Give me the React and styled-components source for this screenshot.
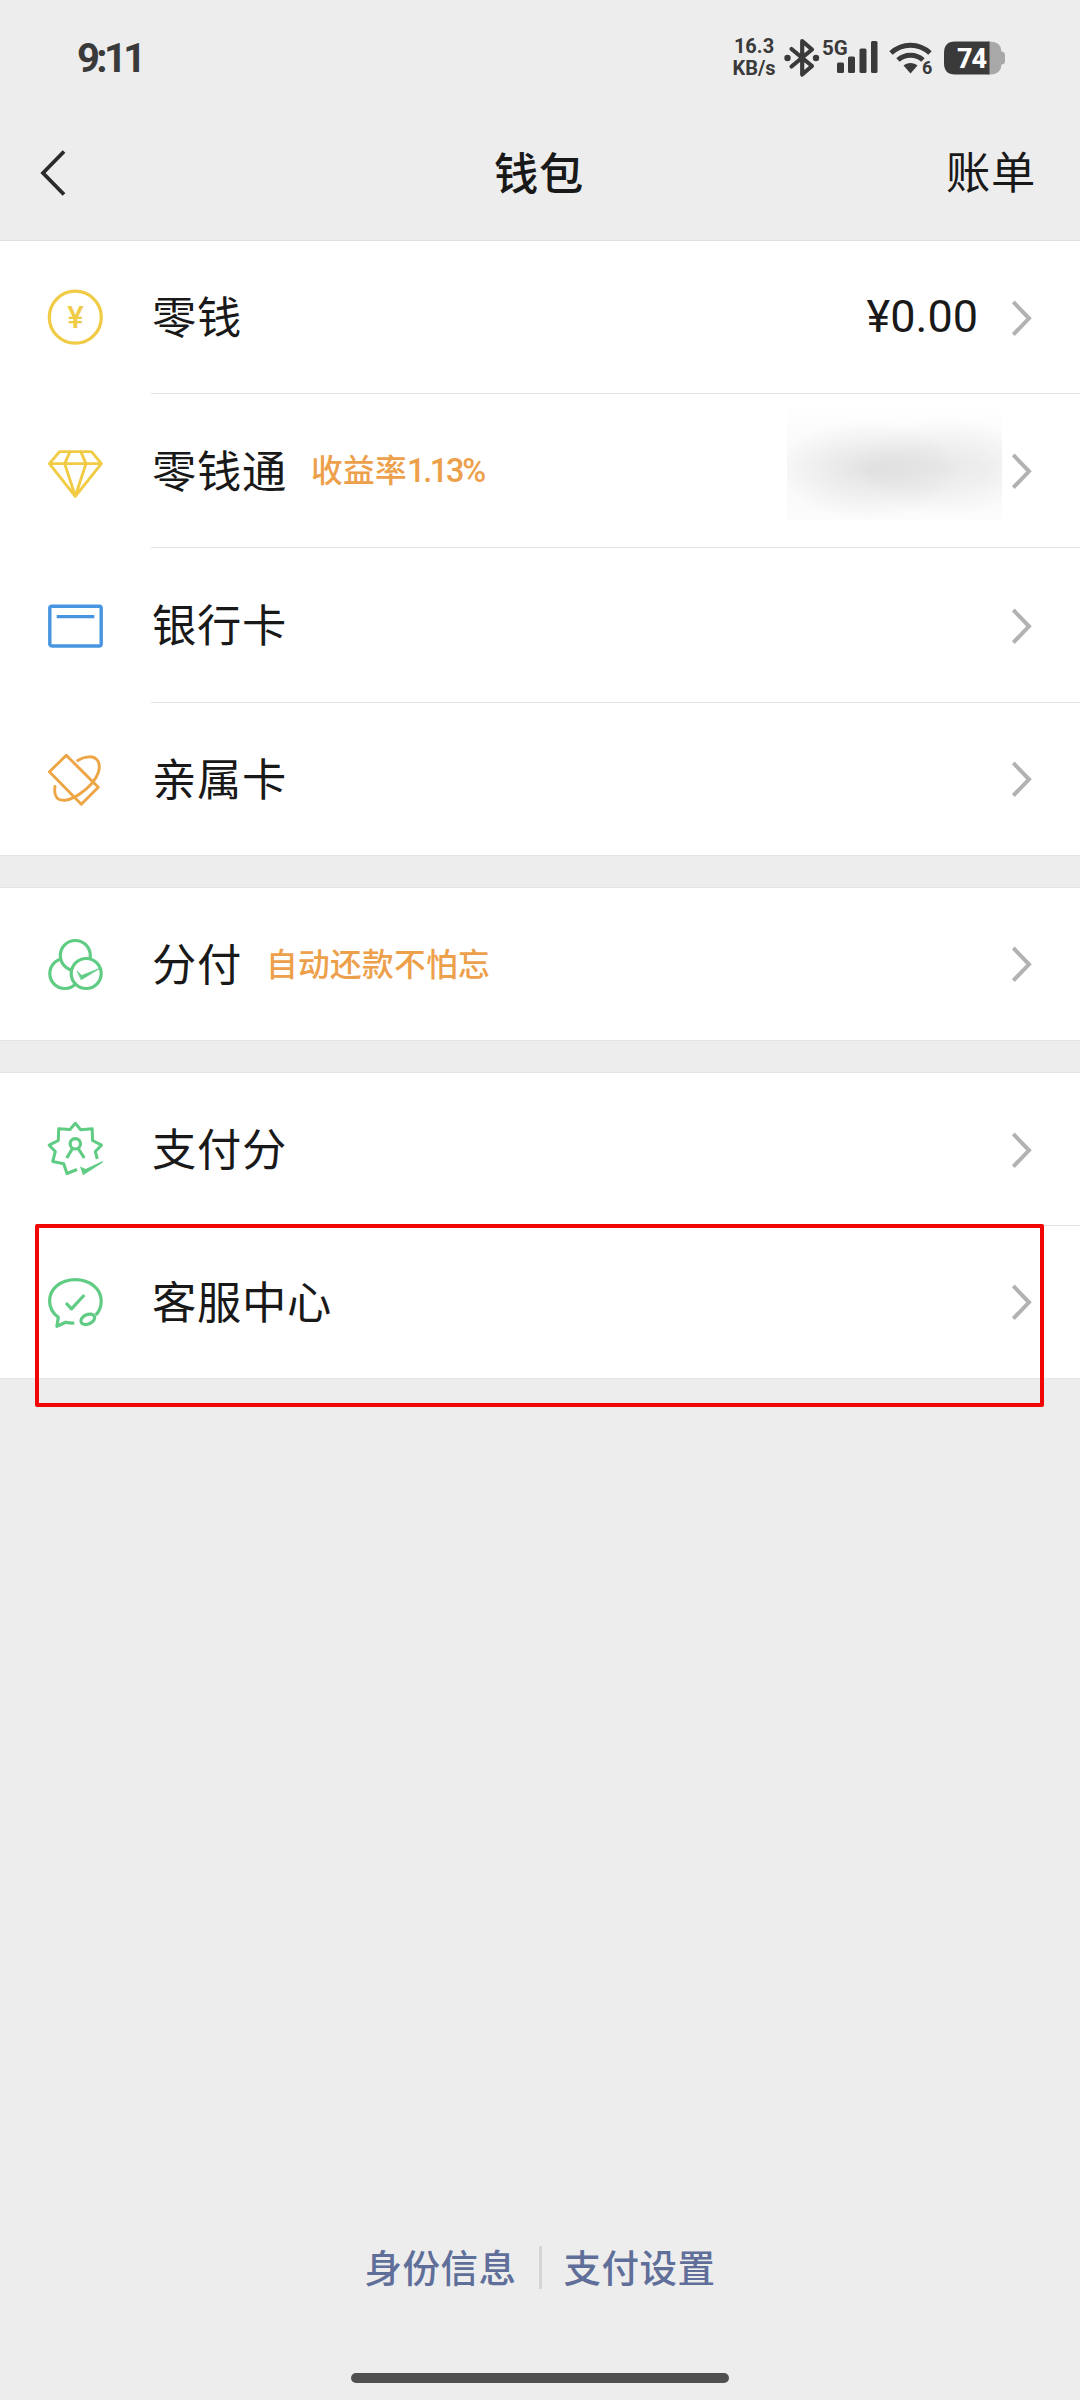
import React from 'react';
import styled, { createGlobalStyle } from 'styled-components';

const CJK = '"Noto Sans CJK SC", "Noto Sans", sans-serif';
const NUM = 'Roboto, "Noto Sans CJK SC", sans-serif';

const GlobalStyle = createGlobalStyle`
  * { box-sizing: border-box; }
  html, body { margin: 0; padding: 0; background: #ededed; }
  body { font-family: ${CJK}; color: #191919; }
`;

const Screen = styled.div`
  display: flex;
  flex-direction: column;
  width: 1080px;
  height: 2400px;
  background: #ededed;
  overflow: hidden;
`;

const StatusBar = styled.header`
  display: flex;
  align-items: center;
  justify-content: space-between;
  height: 115px;
  padding: 0 75px 0 77px;
  color: #3a3a3a;
`;

const Clock = styled.div`
  padding-top: 2px;
  font: 700 40px/50px ${NUM};
  letter-spacing: -3.6px;
`;

const StatusIcons = styled.div`
  display: flex;
  align-items: center;
`;

const NetSpeed = styled.div`
  display: flex;
  flex-direction: column;
  align-items: center;
  width: 44px;
  margin-right: 8px;
  padding-bottom: 1px;
  font: 700 20px/22px ${NUM};
  span + span { letter-spacing: -0.1px; }
`;

const StatusGlyph = styled.svg`
  display: block;
  flex: none;
  overflow: visible;
  margin-right: ${(p) => p.$gap || 0}px;
`;

const SignalBox = styled.div`
  display: flex;
  align-items: flex-start;
  height: 36px;
  margin-right: 11px;
`;

const NetType = styled.span`
  width: 15px;
  margin-left: -1px;
  margin-top: -4px;
  overflow: visible;
  white-space: nowrap;
  font: 700 20.5px/24px ${NUM};
`;

const WifiBox = styled.div`
  display: flex;
  align-items: flex-end;
  height: 36px;
  margin-right: 11px;
`;

const WifiGen = styled.span`
  width: 11px;
  margin-left: -11px;
  margin-bottom: -2px;
  font: 700 18px/20px ${NUM};
`;

const NavBar = styled.nav`
  display: grid;
  grid-template-columns: 1fr auto 1fr;
  align-items: center;
  height: 126px;
  padding: 0 44px 12px 39px;
  border-bottom: 1px solid #e0e0e0;
`;

const NavTitle = styled.h1`
  margin: -2px 0 0;
  padding-left: 3px;
  font: 500 44.3px/60px ${CJK};
  letter-spacing: 0.7px;
`;

const NavAction = styled.div`
  justify-self: end;
  margin-top: -4px;
  font: 400 44.3px/60px ${CJK};
  letter-spacing: 0.7px;
`;

const BackIcon = styled.svg`
  display: block;
  margin-top: 2px;
`;

const Group = styled.section`
  background: #fff;
  margin-bottom: 31px;
  border-bottom: 1px solid #e4e4e4;
  border-top: ${(p) => (p.$first ? 'none' : '1px solid #e4e4e4')};
`;

const Row = styled.div`
  position: relative;
  display: flex;
  align-items: center;
  height: ${(p) => p.$h}px;
  padding-left: 45px;
`;

const RowIcon = styled.svg`
  display: block;
  flex: none;
  width: 60px;
  height: 60px;
  margin-right: 46px;
  fill: none;
  stroke: ${(p) => p.$color};
  stroke-width: 3.2;
  stroke-linejoin: round;
  stroke-linecap: round;
`;

const RowBody = styled.div`
  display: flex;
  align-items: center;
  flex: 1;
  height: 100%;
  padding-left: 1px;
  padding-right: 48px;
  background: ${(p) => (p.$divided ? 'linear-gradient(#e3e3e3, #e3e3e3) bottom / 100% 1px no-repeat' : 'none')};
`;

const Label = styled.span`
  padding-bottom: 5px;
  font: 400 44.3px/60px ${CJK};
  letter-spacing: 0.7px;
`;

const Tag = styled.span`
  margin-left: 24px;
  padding-bottom: 4px;
  font: 500 31.7px/44px ${CJK};
  letter-spacing: 0.3px;
  color: #eda04b;
`;

const TagNumber = styled.span`
  font-family: ${NUM};
  font-size: 32.5px;
  letter-spacing: -2.3px;
`;

const Trailing = styled.div`
  display: flex;
  align-items: center;
  margin-left: auto;
`;

const Amount = styled.span`
  margin-right: 34px;
  padding-bottom: 2px;
  font: 400 45px/56px ${NUM};
`;

const MaskedAmount = styled.div`
  width: 215px;
  height: 114px;
  margin-right: 10px;
  margin-bottom: 17px;
  background:
    radial-gradient(ellipse 88px 50px at 82px 64px, rgba(0,0,0,0.085), rgba(0,0,0,0.045) 50%, rgba(0,0,0,0) 100%),
    radial-gradient(ellipse 88px 50px at 158px 61px, rgba(0,0,0,0.06), rgba(0,0,0,0.035) 50%, rgba(0,0,0,0) 100%),
    linear-gradient(#fff, #f7f7f7 50%, #fcfcfc);
`;

const Highlight = styled.div`
  position: absolute;
  left: 35px;
  top: -2px;
  width: 1009px;
  height: 183px;
  border: 4px solid #f20505;
  border-radius: 2px;
  z-index: 1;
`;

const Footer = styled.footer`
  display: flex;
  align-items: center;
  justify-content: center;
  gap: 24px;
  margin-top: auto;
  margin-bottom: 84px;
  height: 43px;
`;

const FooterLink = styled.a`
  margin-top: -5px;
  font: 500 37.5px/43px ${CJK};
  letter-spacing: 0.5px;
  color: #5f6f9a;
  &:first-child { margin-right: -2px; }
  &:last-child { margin-left: -2px; }
`;

const FooterRule = styled.i`
  width: 3px;
  height: 43px;
  background: #d5d5d5;
`;

const HomeBar = styled.div`
  flex: none;
  align-self: center;
  width: 378px;
  height: 10px;
  margin-bottom: 17px;
  border-radius: 5px;
  background: #505050;
`;

const Chevron = () => (
  <svg width="20" height="36" viewBox="0 0 20 36" fill="none" stroke="#b2b2b2" strokeWidth="4">
    <path d="M1.3 2 L17 18.3 L1.3 34.6" />
  </svg>
);

const icons = {
  coin: (
    <>
      <circle cx="30.3" cy="29.2" r="26" />
      <text x="30.4" y="40" textAnchor="middle" fontFamily="Roboto" fontWeight="500" fontSize="31" fill="#f0cb45" stroke="none">¥</text>
    </>
  ),
  diamond: (
    <path d="M14.6 10.6H46.4L56.4 22.6L30.3 55.3L4.4 22.6ZM4.4 22.6H56.4M25 10.6L19.7 22.6L30.3 55.3L41 22.6L35.8 10.6" strokeWidth="2.9" />
  ),
  card: (
    <>
      <rect x="4.8" y="10.2" width="51.4" height="39.8" rx="2" strokeWidth="3.4" />
      <path d="M11.7 20.7H49.3" strokeLinecap="butt" />
    </>
  ),
  family: (
    <path d="M21.3 6.3L4.4 22.8L36.3 55.2L53.3 38.3ZM32.7 11.4C40 7 49.5 6 53 12.2C56.5 19 52.5 28 46.5 34.7C40 42 30 49.5 21.5 51C11 52.5 8.8 46 10 37.5" strokeWidth="2.9" />
  ),
  trio: (
    <>
      <circle cx="19.8" cy="39.5" r="15" />
      <circle cx="30.3" cy="21.5" r="15" fill="#fff" />
      <circle cx="41.2" cy="39.5" r="15" fill="#fff" />
      <path d="M32.3 37.3L36.7 41.5L54 34.8L36.5 45.6Z" fill="#5fcb83" stroke="#5fcb83" strokeWidth="0.8" />
    </>
  ),
  score: (
    <>
      <path d="M52.3 39L50.3 31.5L56.5 25.2L47.5 20.5L47.2 8.8L35.7 9.7L30.3 3.3L25 9.5L13.7 8.8L13.3 20.5L4.2 25.2L10.3 31.5L7.7 41.5L18.7 43.8L22 53.5L32 49.5" strokeWidth="3" strokeLinecap="butt" />
      <circle cx="30.3" cy="23.8" r="5.2" />
      <path d="M27.5 28.5L21.7 38M33.2 28.5L39.3 38" strokeLinecap="butt" />
      <path d="M35 46.5L40.5 49L57.8 41V42.5L38 55.3Z" fill="#5fcb83" stroke="none" />
    </>
  ),
  service: (
    <>
      <path d="M50.8 43C54.3 39.5 56.2 34.5 56.2 29C56.2 17 45 7.7 30.3 7.7C15.5 7.7 4.6 17 4.6 29C4.6 36 8 41.5 13.3 45.3L11.9 54.3L20.7 50.2C23.5 50.9 26.3 51.2 29.3 51" strokeLinecap="butt" />
      <ellipse cx="42.8" cy="47.3" rx="7.3" ry="4.7" transform="rotate(-25 42.8 47.3)" />
      <path d="M21 31L26.5 36.8L39.3 23" strokeLinecap="butt" />
    </>
  ),
};

const groups = [
  [
    { icon: 'coin', color: '#f0cb45', label: '零钱', amount: '¥0.00', h: 153 },
    { icon: 'diamond', color: '#f2cb45', label: '零钱通', tag: '收益率', tagNumber: '1.13%', masked: true, h: 154 },
    { icon: 'card', color: '#4795e0', label: '银行卡', h: 155 },
    { icon: 'family', color: '#eda545', label: '亲属卡', h: 152 },
  ],
  [{ icon: 'trio', color: '#5fcb83', label: '分付', tag: '自动还款不怕忘', h: 152 }],
  [
    { icon: 'score', color: '#5fcb83', label: '支付分', h: 153 },
    { icon: 'service', color: '#5fcb83', label: '客服中心', highlight: true, h: 152 },
  ],
];

const WalletRow = ({ item, divided }) => (
  <Row $h={item.h}>
    <RowIcon viewBox="0 0 60 60" $color={item.color}>{icons[item.icon]}</RowIcon>
    <RowBody $divided={divided}>
      <Label>{item.label}</Label>
      {item.tag && (
        <Tag>
          {item.tag}
          {item.tagNumber && <TagNumber>{item.tagNumber}</TagNumber>}
        </Tag>
      )}
      <Trailing>
        {item.amount && <Amount>{item.amount}</Amount>}
        {item.masked && <MaskedAmount />}
        <Chevron />
      </Trailing>
    </RowBody>
    {item.highlight && <Highlight />}
  </Row>
);

export default function App() {
  return (
    <>
      <GlobalStyle />
      <Screen>
        <StatusBar>
          <Clock>9:11</Clock>
          <StatusIcons>
            <NetSpeed>
              <span>16.3</span>
              <span>KB/s</span>
            </NetSpeed>
            <StatusGlyph width="36" height="40" viewBox="0 0 36 40" $gap={3} fill="none" stroke="#3a3a3a" strokeWidth="4.2" strokeLinejoin="round" strokeLinecap="round">
              <path d="M7.5 11L28 28L18.2 36.5V3L28 11.5L7.5 28.5" />
              <circle cx="3.5" cy="20" r="3.2" fill="#3a3a3a" stroke="none" />
              <circle cx="32" cy="20" r="3.2" fill="#3a3a3a" stroke="none" />
            </StatusGlyph>
            <SignalBox>
              <NetType>5G</NetType>
              <StatusGlyph width="41" height="34" viewBox="14 4 41 34" fill="#3a3a3a">
                <rect x="14" y="26.5" width="7" height="10.5" rx="1.5" />
                <rect x="25" y="20.5" width="7" height="16.5" rx="1.5" />
                <rect x="36.5" y="12.5" width="7" height="24.5" rx="1.5" />
                <rect x="48" y="5" width="6.5" height="32" rx="1.5" />
              </StatusGlyph>
            </SignalBox>
            <WifiBox>
              <StatusGlyph width="44" height="36" viewBox="0 2 44 36" fill="none" stroke="#3a3a3a" strokeWidth="5">
                <path d="M2 15C13 4.5 30 4.5 41 15" />
                <path d="M9 22C16 15.5 27 15.5 34 22" />
                <path d="M14.5 27.5C18 24 25 24 28.5 27.5L21.5 35.5Z" fill="#3a3a3a" stroke="none" />
              </StatusGlyph>
              <WifiGen>6</WifiGen>
            </WifiBox>
            <StatusGlyph width="61" height="34" viewBox="0 0 61 34">
              <path d="M44 0.5H46Q57 0.5 57.5 10.5H58Q61 11 61 14V20Q61 23 58 23.5H57.5Q57 33.5 46 33.5H44Z" fill="#a8a8a8" />
              <path d="M11 0.5H45.5V33.5H11Q0 33.5 0 22V12Q0 0.5 11 0.5Z" fill="#3a3a3a" />
              <text x="27.5" y="26.5" textAnchor="middle" fontFamily="Roboto" fontWeight="800" fontSize="27" fill="#fff" letterSpacing="-1">74</text>
            </StatusGlyph>
          </StatusIcons>
        </StatusBar>
        <NavBar>
          <BackIcon width="28" height="48" viewBox="0 0 28 48" fill="none" stroke="#2a2a2a" strokeWidth="3.8">
            <path d="M25 2.5L4 24L25 45.5" />
          </BackIcon>
          <NavTitle>钱包</NavTitle>
          <NavAction>账单</NavAction>
        </NavBar>
        {groups.map((items, g) => (
          <Group key={g} $first={g === 0}>
            {items.map((item, i) => (
              <WalletRow key={item.label} item={item} divided={i < items.length - 1} />
            ))}
          </Group>
        ))}
        <Footer>
          <FooterLink>身份信息</FooterLink>
          <FooterRule />
          <FooterLink>支付设置</FooterLink>
        </Footer>
        <HomeBar />
      </Screen>
    </>
  );
}
